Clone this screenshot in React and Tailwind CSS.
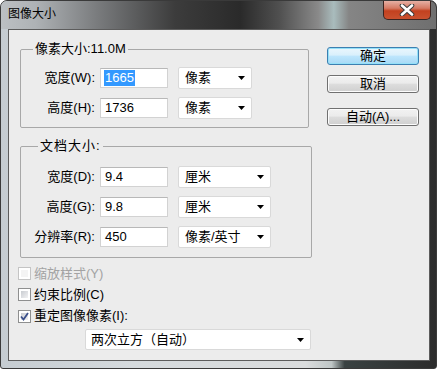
import React from "react";

const FONT = "font-['Liberation_Sans','Noto_Sans_CJK_SC',sans-serif]";

function Arrow() {
  return (
    <svg width="7" height="4" viewBox="0 0 7 4" className="shrink-0">
      <path d="M0 0 H7 L3.5 4 Z" fill="#000" />
    </svg>
  );
}

function Select({ text, w }) {
  return (
    <div
      className={`${w} h-[22px] bg-white border border-[#d9d9d9] rounded-[2px] flex items-center justify-between pl-[6px] pr-[6px] text-[13px] leading-[20px] text-black`}
    >
      <span>{text}</span>
      <Arrow />
    </div>
  );
}

function Input({ value, selected }) {
  return (
    <div className="w-[68px] h-[20px] bg-white border border-[#d2d2d2] border-t-[#b8b8b8] flex items-center pl-[3px] text-[13px] leading-[16px] text-black">
      {selected ? (
        <span className="bg-[#3399ff] text-white px-[1px]">{value}</span>
      ) : (
        <span className="px-[1px]">{value}</span>
      )}
    </div>
  );
}

function Row({ label, value, unit, selW, selected }) {
  return (
    <div className="h-[22px] flex items-center">
      <div className="w-[74px] text-right text-[13px] leading-[20px] text-black whitespace-nowrap">{label}</div>
      <div className="w-[5px]" />
      <Input value={value} selected={selected} />
      <div className="w-[10px]" />
      <Select text={unit} w={selW} />
    </div>
  );
}

function Checkbox({ checked, disabled }) {
  return (
    <div
      className={`w-[13px] h-[13px] border ${
        disabled ? "border-[#c4c4c4]" : "border-[#8e8f8f]"
      } bg-white p-[2px] shrink-0`}
    >
      <div
        className={`w-full h-full ${
          disabled
            ? "bg-[#f4f4f4]"
            : "bg-[linear-gradient(135deg,#c9ccd1,#f2f2f3)]"
        } flex items-center justify-center`}
      >
        {checked && (
          <svg width="9" height="9" viewBox="0 0 9 9" className="-m-[1px]">
            <path
              d="M1 4.5 L3.5 7.5 L8 1"
              fill="none"
              stroke="#3a4f8a"
              strokeWidth="1.8"
            />
          </svg>
        )}
      </div>
    </div>
  );
}

function Button({ children, primary }) {
  return (
    <div
      className={`w-[92px] h-[18px] rounded-[3px] border flex items-center justify-center text-[13px] leading-[16px] text-black ${
        primary
          ? "border-[#3c7fb1] bg-[linear-gradient(to_bottom,#eaf6fd_0%,#d9f0fc_45%,#bee6fd_50%,#a7d9f5_100%)] shadow-[inset_0_0_0_1px_#94e0f8]"
          : "border-[#707070] bg-[linear-gradient(to_bottom,#f2f2f2_0%,#ebebeb_45%,#dddddd_50%,#cfcfcf_100%)] shadow-[inset_0_0_0_1px_#fcfcfc]"
      }`}
    >
      {children}
    </div>
  );
}

export default function App() {
  return (
    <div
      className={`${FONT} w-[437px] h-[369px] flex flex-col rounded-t-[7px] rounded-b-[3px] border border-[#3a3a3a] bg-[linear-gradient(to_right,#c5ccd1_0%,#d5dadd_30%,#dadcdd_70%,#bfc6c6_76%,#3a4242_79%,#2c2c2c_100%)] overflow-hidden`}
    >
      {/* Title bar */}
      <div className="h-[28px] shrink-0 flex items-start justify-between rounded-t-[6px] bg-[linear-gradient(to_right,#bcc0c3_0%,#aeb2b5_8%,#7a7c7e_22%,#3c3c3c_40%,#2a2a2a_55%,#505050_64%,#8a8a8a_73%,#a9bcbd_76.5%,#858585_80%,#6f6f6f_100%)]">
        <div className="pl-[7px] pt-[6px] text-[12px] leading-[15px] text-black">图像大小</div>
        <div className="mr-[5px] w-[48px] h-[19px] rounded-b-[5px] border border-t-0 border-[#3b2420] bg-[linear-gradient(to_bottom,#e6b0a4_0%,#d57a64_40%,#c3411f_55%,#c9512f_100%)] flex items-center justify-center">
          <svg width="16" height="12" viewBox="0 0 16 12">
            <path d="M3 1.5 L13 10.5 M13 1.5 L3 10.5" stroke="#3c3c3c" strokeWidth="4.6" strokeLinecap="round" />
            <path d="M3 1.5 L13 10.5 M13 1.5 L3 10.5" stroke="#ffffff" strokeWidth="2.6" strokeLinecap="round" />
          </svg>
        </div>
      </div>

      {/* Client area */}
      <div className="ml-[7px] mr-[6px] mb-[7px] flex-1 border border-[#5c5c5c] bg-[#ececec] flex">
        {/* Left column */}
        <div className="w-[303px] pl-[9px] pt-[12px] flex flex-col">
          <fieldset className="ml-[2px] w-[289px] border border-[#a8a8a8] rounded-[2px] pb-[8px]">
            <legend className="ml-[12px] px-[2px] text-[13px] leading-[14px] text-black">像素大小:11.0M</legend>
            <div className="mt-[11px] flex flex-col gap-[8px]">
              <Row label="宽度(W):" value="1665" unit="像素" selW="w-[74px]" selected />
              <Row label="高度(H):" value="1736" unit="像素" selW="w-[74px]" />
            </div>
          </fieldset>

          <fieldset className="ml-[2px] mt-[11px] w-[292px] border border-[#a8a8a8] rounded-[2px] pb-[9px]">
            <legend className="ml-[17px] px-[2px] text-[13px] leading-[14px] text-black tracking-[1px]">文档大小:</legend>
            <div className="mt-[13px] flex flex-col gap-[8px]">
              <Row label="宽度(D):" value="9.4" unit="厘米" selW="w-[93px]" />
              <Row label="高度(G):" value="9.8" unit="厘米" selW="w-[93px]" />
              <Row label="分辨率(R):" value="450" unit="像素/英寸" selW="w-[93px]" />
            </div>
          </fieldset>

          <div className="mt-[5px] flex flex-col">
            <div className="h-[21px] flex items-center gap-[3px]">
              <Checkbox disabled />
              <span className="text-[13px] leading-[16px] text-[#a3a3a3]">缩放样式(Y)</span>
            </div>
            <div className="h-[21px] flex items-center gap-[3px]">
              <Checkbox />
              <span className="text-[13px] leading-[16px] text-black">约束比例(C)</span>
            </div>
            <div className="h-[22px] flex items-center gap-[3px]">
              <Checkbox checked />
              <span className="text-[13px] leading-[16px] text-black">重定图像像素(I):</span>
            </div>
            <div className="mt-[2px] ml-[67px] w-[226px] h-[21px] bg-white border border-[#d9d9d9] rounded-[2px] flex items-center justify-between pl-[5px] pr-[6px] text-[13px] leading-[16px] text-black">
              <span>两次立方（自动）</span>
              <Arrow />
            </div>
          </div>
        </div>

        {/* Right column */}
        <div className="ml-[15px] pt-[17px] flex flex-col">
          <Button primary>确定</Button>
          <div className="h-[10px]" />
          <Button>取消</Button>
          <div className="h-[15px]" />
          <Button>自动(A)...</Button>
        </div>
      </div>
    </div>
  );
}
